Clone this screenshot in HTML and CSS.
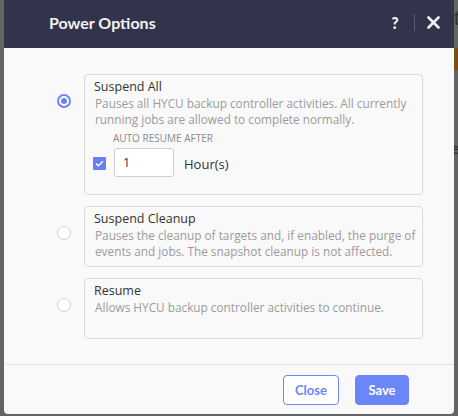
FILE: index.html
```html
<!DOCTYPE html>
<html>
<head>
<meta charset="utf-8">
<link rel="stylesheet" href="styles.css">
</head>
<body>
<div class="backdrop">
  <div class="dialog">
    <div class="header">
      <div class="title">Power Options</div>
      <div class="tools">
        <span class="help">?</span>
        <span class="sep"></span>
        <svg class="close-x" width="13" height="13" viewBox="0 0 13 13"><path d="M1.5 1.5 L11.5 11.5 M11.5 1.5 L1.5 11.5" stroke="#f2f2f2" stroke-width="2.6" stroke-linecap="round"/></svg>
      </div>
    </div>
    <div class="body">
      <div class="option">
        <span class="radio checked"></span>
        <div class="card card-first">
          <div class="opt-title">Suspend All</div>
          <div class="opt-desc">Pauses all HYCU backup controller activities. All currently running jobs are allowed to complete normally.</div>
          <div class="auto-label">AUTO RESUME AFTER</div>
          <div class="auto-row">
            <span class="checkbox">
              <svg width="9" height="7" viewBox="0 0 9 7"><path d="M1 3.6 L3.4 5.8 L8 1.2" fill="none" stroke="#fff" stroke-width="1.5"/></svg>
            </span>
            <span class="num-input">1</span>
            <span class="unit">Hour(s)</span>
          </div>
        </div>
      </div>
      <div class="option">
        <span class="radio"></span>
        <div class="card">
          <div class="opt-title">Suspend Cleanup</div>
          <div class="opt-desc">Pauses the cleanup of targets and, if enabled, the purge of events and jobs. The snapshot cleanup is not affected.</div>
        </div>
      </div>
      <div class="option">
        <span class="radio"></span>
        <div class="card">
          <div class="opt-title">Resume</div>
          <div class="opt-desc">Allows HYCU backup controller activities to continue.</div>
        </div>
      </div>
    </div>
    <div class="footer">
      <button class="btn btn-outline">Close</button>
      <button class="btn btn-primary">Save</button>
    </div>
  </div>
  <div class="behind">
    <span class="behind-t">t</span>
    <span class="behind-bar"></span>
    <span class="behind-e">e</span>
  </div>
</div>
</body>
</html>
```
FILE: styles.css
```css
* { box-sizing: border-box; }
html, body { margin: 0; padding: 0; }
body {
  width: 458px;
  height: 416px;
  overflow: hidden;
  background: #646464;
  font-family: "Open Sans", "Noto Sans", sans-serif;
}
.backdrop {
  display: flex;
  height: 416px;
  padding-left: 4px;
}
.dialog {
  width: 450px;
  height: 414px;
  background: #f9f9f9;
  border-radius: 0 0 4px 4px;
  display: flex;
  flex-direction: column;
  overflow: hidden;
}
.header {
  height: 48px;
  background: #32344b;
  display: flex;
  align-items: center;
  justify-content: space-between;
  padding: 0 14px 0 45px;
}
.title {
  font-family: "Lato", "Noto Sans", sans-serif;
  font-weight: 700;
  font-size: 16px;
  color: #f2f2f2;
  margin-top: -4px;
}
.tools {
  display: flex;
  align-items: center;
  margin-top: -4px;
}
.help {
  font-family: "Lato", sans-serif;
  font-weight: 900;
  font-size: 16px;
  color: #f2f2f2;
  width: 12px;
  text-align: center;
}
.sep {
  width: 1px;
  height: 17px;
  background: #5b5d72;
  margin: 0 12px 0 13px;
}
.close-x { display: block; }
.body {
  flex: 1;
  padding: 26px 31px 0 53px;
  display: flex;
  flex-direction: column;
  gap: 11px;
}
.option {
  display: flex;
  align-items: flex-start;
  gap: 13px;
}
.radio {
  width: 14px;
  height: 14px;
  border-radius: 50%;
  border: 1.5px solid #d2d2d2;
  background: #fff;
  margin-top: 20px;
  flex: none;
  position: relative;
}
.radio.checked {
  border: 2px solid #6b84f8;
}
.radio.checked::after {
  content: "";
  position: absolute;
  left: 2px;
  top: 2px;
  width: 6px;
  height: 6px;
  border-radius: 50%;
  background: #6b84f8;
}
.card {
  flex: 1;
  min-height: 61px;
  border: 1px solid #d9d9d9;
  border-radius: 4px;
  background: #f9f9f9;
  padding: 3px 2px 7px 9px;
}
.card-first {
  padding-bottom: 17px;
}
.opt-title {
  font-size: 12.5px;
  line-height: 17px;
  color: #333;
}
.opt-desc {
  font-size: 11.8px;
  line-height: 16px;
  color: #9b9b9b;
  padding-left: 1px;
}
.auto-label {
  font-size: 10px;
  line-height: 14px;
  color: #8a8a8a;
  margin: 4px 0 3px 19px;
}
.auto-row {
  display: flex;
  align-items: center;
}
.checkbox {
  width: 13px;
  height: 13px;
  background: #6b7cf5;
  border-radius: 1px;
  display: flex;
  align-items: center;
  justify-content: center;
  margin-left: -1px;
  margin-top: 1px;
}
.checkbox svg { display: block; }
.num-input {
  width: 60px;
  height: 29px;
  margin-left: 8px;
  background: #fff;
  border: 1px solid #cfcfcf;
  border-radius: 3px;
  font-size: 12.5px;
  color: #333;
  line-height: 27px;
  padding-left: 8px;
}
.unit {
  margin-left: 10px;
  font-size: 13px;
  color: #333;
  margin-top: 2px;
}
.footer {
  height: 50px;
  border-top: 1px solid #e3e3e3;
  display: flex;
  justify-content: flex-end;
  align-items: flex-start;
  padding: 10px 45px 0 0;
  gap: 16px;
}
.btn {
  font-family: "Lato", "Noto Sans", sans-serif;
  font-weight: 700;
  font-size: 13px;
  height: 30px;
  border-radius: 4px;
  padding: 0;
  cursor: pointer;
}
.btn-outline {
  width: 56px;
  background: #fff;
  border: 1px solid #6b86f9;
  color: #6b86f9;
}
.btn-primary {
  width: 54px;
  background: #6b86f9;
  border: 1px solid #6b86f9;
  color: #fff;
}
.behind {
  width: 4px;
  height: 416px;
  position: relative;
  overflow: hidden;
}
.behind-t {
  position: absolute;
  left: 0;
  top: 8px;
  font-family: "Liberation Sans", sans-serif;
  font-size: 20px;
  line-height: 20px;
  color: #333;
}
.behind-bar {
  position: absolute;
  left: 0;
  top: 48px;
  width: 4px;
  height: 22px;
  background: #7a4e18;
}
.behind-e {
  position: absolute;
  left: -2px;
  top: 142px;
  font-family: "Liberation Sans", sans-serif;
  font-size: 14px;
  line-height: 14px;
  color: #2a2a2a;
}
```
